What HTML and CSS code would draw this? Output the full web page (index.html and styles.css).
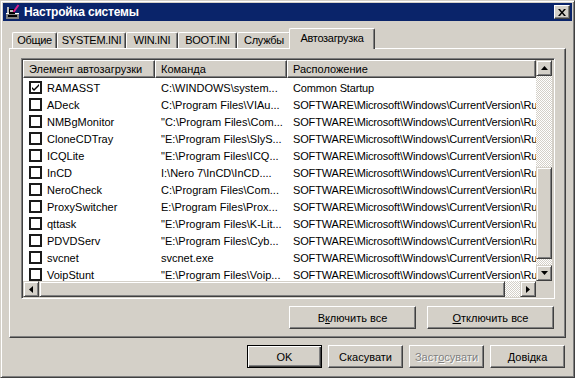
FILE: index.html
```html
<!DOCTYPE html>
<html lang="ru">
<head>
    <meta charset="UTF-8">
    <title>Настройка системы</title>
    <link rel="stylesheet" href="styles.css">
</head>
<body>

    <div class="window">
        <!-- Title Bar -->
        <div class="titlebar">
            <svg class="app-icon" width="16" height="16" viewBox="0 0 16 16">
                <rect x="1" y="9" width="13" height="6" fill="#808080"/>
                <rect x="1" y="9" width="13" height="1" fill="#fff"/>
                <rect x="3" y="11" width="9" height="2" fill="#000"/>
                <rect x="4" y="5" width="6" height="5" fill="#000"/>
                <rect x="5" y="6" width="3" height="2" fill="#c0c0c0"/>
                <rect x="2" y="3" width="2" height="6" fill="#c0c0c0"/>
                <line x1="8.5" y1="8" x2="13.5" y2="1" stroke="#e0208c" stroke-width="2"/>
            </svg>
            <span class="title">Настройка системы</span>
            <div class="close-btn">
                <svg width="8" height="7" viewBox="0 0 8 7">
                    <path d="M0 0h2l2 2.5L6 0h2L5 3.5 8 7H6L4 4.5 2 7H0l3-3.5z" fill="#000"/>
                </svg>
            </div>
        </div>

        <!-- Tabs -->
        <div class="tabs">
            <div class="tab tab-general">Общие</div>
            <div class="tab tab-system">SYSTEM.INI</div>
            <div class="tab tab-win">WIN.INI</div>
            <div class="tab tab-boot">BOOT.INI</div>
            <div class="tab tab-services">Службы</div>
            <div class="tab tab-startup active">Автозагрузка</div>
        </div>

        <div class="panel">
            <!-- Startup List -->
            <div class="listview">
                <div class="lv-content">
                    <div class="lv-header">
                        <div class="lv-head col-name">Элемент автозагрузки</div>
                        <div class="lv-head col-cmd">Команда</div>
                        <div class="lv-head col-loc">Расположение</div>
                    </div>
                    <div class="lv-rows">
                        <div class="lv-row">
                            <div class="col-name"><span class="check checked"><svg width="9" height="9" viewBox="0 0 9 9"><path d="M1 4l2 2 5-5v2L3 8 1 6z" fill="#000"/></svg></span>RAMASST</div>
                            <div class="col-cmd">C:\WINDOWS\system...</div>
                            <div class="col-loc">Common Startup</div>
                        </div>
                        <div class="lv-row">
                            <div class="col-name"><span class="check"></span>ADeck</div>
                            <div class="col-cmd">C:\Program Files\VIAu...</div>
                            <div class="col-loc">SOFTWARE\Microsoft\Windows\CurrentVersion\Run</div>
                        </div>
                        <div class="lv-row">
                            <div class="col-name"><span class="check"></span>NMBgMonitor</div>
                            <div class="col-cmd">"C:\Program Files\Com...</div>
                            <div class="col-loc">SOFTWARE\Microsoft\Windows\CurrentVersion\Run</div>
                        </div>
                        <div class="lv-row">
                            <div class="col-name"><span class="check"></span>CloneCDTray</div>
                            <div class="col-cmd">"E:\Program Files\SlyS...</div>
                            <div class="col-loc">SOFTWARE\Microsoft\Windows\CurrentVersion\Run</div>
                        </div>
                        <div class="lv-row">
                            <div class="col-name"><span class="check"></span>ICQLite</div>
                            <div class="col-cmd">"E:\Program Files\ICQ...</div>
                            <div class="col-loc">SOFTWARE\Microsoft\Windows\CurrentVersion\Run</div>
                        </div>
                        <div class="lv-row">
                            <div class="col-name"><span class="check"></span>InCD</div>
                            <div class="col-cmd">I:\Nero 7\InCD\InCD....</div>
                            <div class="col-loc">SOFTWARE\Microsoft\Windows\CurrentVersion\Run</div>
                        </div>
                        <div class="lv-row">
                            <div class="col-name"><span class="check"></span>NeroCheck</div>
                            <div class="col-cmd">C:\Program Files\Com...</div>
                            <div class="col-loc">SOFTWARE\Microsoft\Windows\CurrentVersion\Run</div>
                        </div>
                        <div class="lv-row">
                            <div class="col-name"><span class="check"></span>ProxySwitcher</div>
                            <div class="col-cmd">E:\Program Files\Prox...</div>
                            <div class="col-loc">SOFTWARE\Microsoft\Windows\CurrentVersion\Run</div>
                        </div>
                        <div class="lv-row">
                            <div class="col-name"><span class="check"></span>qttask</div>
                            <div class="col-cmd">"E:\Program Files\K-Lit...</div>
                            <div class="col-loc">SOFTWARE\Microsoft\Windows\CurrentVersion\Run</div>
                        </div>
                        <div class="lv-row">
                            <div class="col-name"><span class="check"></span>PDVDServ</div>
                            <div class="col-cmd">"E:\Program Files\Cyb...</div>
                            <div class="col-loc">SOFTWARE\Microsoft\Windows\CurrentVersion\Run</div>
                        </div>
                        <div class="lv-row">
                            <div class="col-name"><span class="check"></span>svcnet</div>
                            <div class="col-cmd">svcnet.exe</div>
                            <div class="col-loc">SOFTWARE\Microsoft\Windows\CurrentVersion\Run</div>
                        </div>
                        <div class="lv-row">
                            <div class="col-name"><span class="check"></span>VoipStunt</div>
                            <div class="col-cmd">"E:\Program Files\Voip...</div>
                            <div class="col-loc">SOFTWARE\Microsoft\Windows\CurrentVersion\Run</div>
                        </div>
                    </div>
                </div>

                <!-- Vertical Scrollbar -->
                <div class="vscroll">
                    <div class="sb-btn"><svg width="7" height="4"><polygon points="3.5,0 7,4 0,4" fill="#000"/></svg></div>
                    <div class="sb-track">
                        <div class="sb-thumb vthumb"></div>
                    </div>
                    <div class="sb-btn"><svg width="7" height="4"><polygon points="0,0 7,0 3.5,4" fill="#000"/></svg></div>
                </div>

                <!-- Horizontal Scrollbar -->
                <div class="hscroll">
                    <div class="sb-btn"><svg width="4" height="7"><polygon points="4,0 4,7 0,3.5" fill="#000"/></svg></div>
                    <div class="sb-track">
                        <div class="sb-thumb hthumb"></div>
                    </div>
                    <div class="sb-btn"><svg width="4" height="7"><polygon points="0,0 4,3.5 0,7" fill="#000"/></svg></div>
                </div>
                <div class="sb-corner"></div>
            </div>

            <div class="panel-buttons">
                <div class="btn wide">В<u>к</u>лючить все</div>
                <div class="btn wide"><u>О</u>тключить все</div>
            </div>
        </div>

        <!-- Dialog Buttons -->
        <div class="dialog-buttons">
            <div class="btn default">OK</div>
            <div class="btn">Скасувати</div>
            <div class="btn disabled">Заст<u>о</u>сувати</div>
            <div class="btn">Довідка</div>
        </div>
    </div>

</body>
</html>
```

FILE: styles.css
```css
* {
    box-sizing: border-box;
}

body {
    margin: 0;
    font-family: "Liberation Sans", Arial, sans-serif;
    font-size: 11px;
    font-weight: normal;
    color: #000;
    background-color: #d4d0c8;
}

.window {
    width: 575px;
    height: 378px;
    padding: 2px;
    background-color: #d4d0c8;
    border: 1px solid;
    border-color: #d4d0c8 #404040 #404040 #d4d0c8;
    box-shadow: inset 1px 1px #fff, inset -1px -1px #808080;
    display: flex;
    flex-direction: column;
}

/* Title Bar */
.titlebar {
    height: 18px;
    display: flex;
    align-items: center;
    padding: 0 2px;
    background-color: #0a246a;
    color: #fff;
}

.app-icon {
    flex: none;
    margin-right: 3px;
}

.title {
    flex: 1;
    font-weight: bold;
    font-size: 12px;
    letter-spacing: -0.2px;
}

.close-btn {
    width: 16px;
    height: 14px;
    display: flex;
    align-items: center;
    justify-content: center;
    background-color: #d4d0c8;
    border: 1px solid;
    border-color: #fff #404040 #404040 #fff;
    box-shadow: inset -1px -1px #808080;
}

/* Tabs */
.tabs {
    display: flex;
    align-items: flex-end;
    height: 20px;
    margin-top: 7px;
    padding-left: 9px;
}

.tab {
    height: 16px;
    line-height: 15px;
    text-align: center;
    letter-spacing: -0.3px;
    border: 1px solid;
    border-bottom: none;
    border-color: #fff #404040 #404040 #fff;
    border-radius: 2px 2px 0 0;
    box-shadow: inset -1px 0 #808080;
    white-space: nowrap;
    overflow: hidden;
}

.tab-general  { width: 45px; }
.tab-system   { width: 69px; }
.tab-win      { width: 52px; }
.tab-boot     { width: 59px; }
.tab-services { width: 54px; }
.tab-startup  { width: 86px; }

.tab.active {
    position: relative;
    z-index: 1;
    height: 21px;
    margin: 0 0 -1px -2px;
    line-height: 19px;
    background-color: #d4d0c8;
}

/* Tab Panel */
.panel {
    height: 290px;
    margin: 0 6px;
    padding: 9px 10px 0 11px;
    border: 1px solid;
    border-color: #fff #404040 #404040 #fff;
    box-shadow: inset -1px -1px #808080;
}

/* List View */
.listview {
    height: 241px;
    padding: 1px;
    border: 1px solid;
    border-color: #808080 #fff #fff #808080;
    box-shadow: inset 1px 1px #404040, inset -1px -1px #d4d0c8;
    display: grid;
    grid-template-columns: 513px 16px;
    grid-template-rows: 221px 16px;
}

.lv-content {
    background-color: #fff;
    overflow: hidden;
}

.lv-header {
    display: flex;
    height: 18px;
}

.lv-head {
    height: 18px;
    padding-left: 5px;
    line-height: 16px;
    background-color: #d4d0c8;
    border: 1px solid;
    border-color: #fff #404040 #404040 #fff;
    box-shadow: inset -1px -1px #808080;
    white-space: nowrap;
}

.col-name {
    width: 132px;
    flex: none;
}

.col-cmd {
    width: 132px;
    flex: none;
}

.col-loc {
    flex: 1;
}

.lv-rows {
    padding-top: 1px;
}

.lv-row {
    display: flex;
    height: 17px;
    align-items: center;
    white-space: nowrap;
}

.lv-row .col-name {
    display: flex;
    align-items: center;
    gap: 5px;
    padding-left: 6px;
}

.lv-row .col-cmd,
.lv-row .col-loc {
    padding-left: 6px;
}

.lv-row .col-loc {
    letter-spacing: -0.15px;
}

.check {
    width: 13px;
    height: 13px;
    flex: none;
    display: flex;
    align-items: center;
    justify-content: center;
    border: 2px solid #1a1a1a;
    background-color: #fff;
}

/* Scrollbars */
.vscroll,
.hscroll {
    display: flex;
    background: repeating-conic-gradient(#fff 0 25%, #d4d0c8 0 50%) 0 0 / 2px 2px;
}

.vscroll {
    flex-direction: column;
}

.sb-btn,
.sb-thumb {
    flex: none;
    background-color: #d4d0c8;
    border: 1px solid;
    border-color: #d4d0c8 #404040 #404040 #d4d0c8;
    box-shadow: inset 1px 1px #fff, inset -1px -1px #808080;
}

.sb-btn {
    width: 16px;
    height: 16px;
    display: flex;
    align-items: center;
    justify-content: center;
}

.sb-track {
    flex: 1;
    display: flex;
}

.vscroll .sb-track {
    flex-direction: column;
}

.vthumb {
    width: 16px;
    height: 92px;
    margin-top: 91px;
}

.hthumb {
    width: 466px;
    height: 16px;
}

.sb-corner {
    background-color: #d4d0c8;
}

/* Buttons */
.panel-buttons {
    display: flex;
    justify-content: flex-end;
    gap: 11px;
    margin-top: 7px;
    margin-right: 1px;
}

.dialog-buttons {
    display: flex;
    justify-content: flex-end;
    gap: 6px;
    margin-top: 7px;
    margin-right: 7px;
}

.btn {
    width: 75px;
    height: 23px;
    display: flex;
    align-items: center;
    justify-content: center;
    background-color: #d4d0c8;
    border: 1px solid;
    border-color: #fff #404040 #404040 #fff;
    box-shadow: inset -1px -1px #808080;
    white-space: nowrap;
}

.btn.wide {
    width: 127px;
}

.btn.default {
    border-color: #000;
    box-shadow: inset 1px 1px #fff, inset -1px -1px #404040, inset -2px -2px #808080;
}

.btn.disabled {
    color: #808080;
    text-shadow: 1px 1px #fff;
}
```
